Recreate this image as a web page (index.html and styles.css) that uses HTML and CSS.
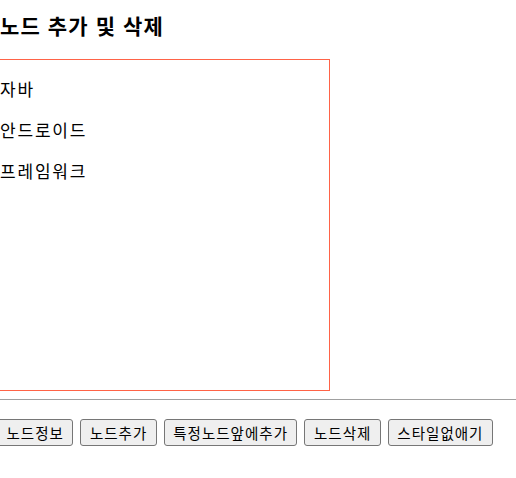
FILE: index.html
```html
<!DOCTYPE html>
<html lang="ko">
<head>
<meta charset="utf-8">
<title>노드 추가 및 삭제</title>
<link rel="stylesheet" href="styles.css">
</head>
<body>
<h3 class="title">노드 추가 및 삭제</h3>
<div class="box">
  <p class="item">자바</p>
  <p class="item">안드로이드</p>
  <p class="item">프레임워크</p>
</div>
<hr class="rule">
<div class="buttons">
  <button class="btn">노드정보</button>
  <button class="btn">노드추가</button>
  <button class="btn">특정노드앞에추가</button>
  <button class="btn">노드삭제</button>
  <button class="btn">스타일없애기</button>
</div>
</body>
</html>
```
FILE: styles.css
```css
html, body {
  margin: 0;
  padding: 0;
  background: #ffffff;
  overflow: hidden;
}
body {
  font-family: "Noto Sans CJK KR", "Noto Sans", sans-serif;
  color: #000;
}
.title {
  margin: 12px 0 20px 0;
  font-size: 21px;
  line-height: 27px;
  font-weight: 700;
  letter-spacing: 1.1px;
}
.box {
  box-sizing: border-box;
  margin-left: -1px;
  width: 331px;
  height: 332px;
  border: 1px solid #ff6347;
  overflow: hidden;
}
.item {
  margin: 16px 0;
  font-size: 17px;
  line-height: 25px;
  letter-spacing: 1.8px;
}
.rule {
  margin: 8px 0 0 0;
  border: none;
  border-top: 1px solid #a0a0a0;
  height: 0;
}
.buttons {
  display: flex;
  gap: 7px;
  margin: 19px 0 0 -3px;
}
.btn {
  box-sizing: border-box;
  height: 27px;
  padding: 0 8.5px;
  font-family: "Noto Sans CJK KR", sans-serif;
  font-size: 14.5px;
  letter-spacing: 1px;
  line-height: 20px;
  color: #000;
  background: #efefef;
  border: 1px solid #767676;
  border-radius: 3px;
}
```
